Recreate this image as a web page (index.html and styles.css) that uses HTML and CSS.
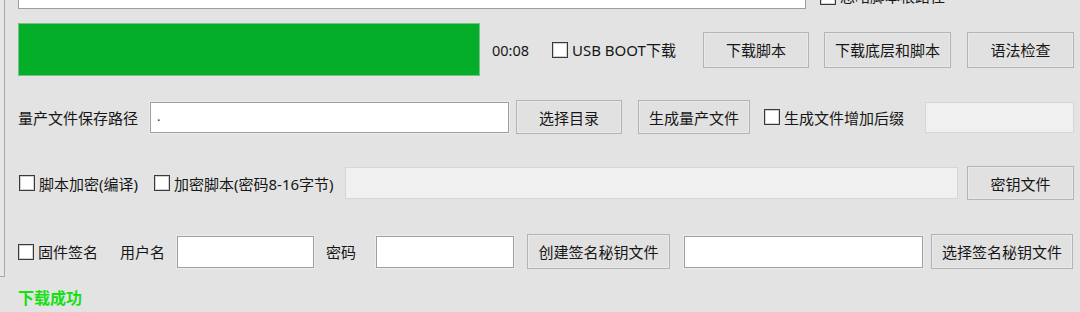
FILE: index.html
```html
<!DOCTYPE html>
<html lang="zh-CN">
<head>
<meta charset="utf-8">
<title>下载工具</title>
<link rel="stylesheet" href="styles.css">
</head>
<body>
<div class="app">
  <div class="frame-edge"></div>

  <div class="row row-top">
    <div class="field field-top"></div>
    <label class="check check-top"><span class="cb"></span><span class="txt">忽略脚本根路径</span></label>
  </div>

  <div class="row row-a">
    <div class="progress"></div>
    <span class="time">00:08</span>
    <label class="check check-usb"><span class="cb"></span><span class="txt">USB BOOT下载</span></label>
    <button class="btn btn-a1">下载脚本</button>
    <button class="btn btn-a2">下载底层和脚本</button>
    <button class="btn btn-a3">语法检查</button>
  </div>

  <div class="row row-b">
    <span class="lbl lbl-path">量产文件保存路径</span>
    <div class="field field-path"><span class="val">.</span></div>
    <button class="btn btn-b1">选择目录</button>
    <button class="btn btn-b2">生成量产文件</button>
    <label class="check check-suffix"><span class="cb"></span><span class="txt">生成文件增加后缀</span></label>
    <div class="field disabled field-suffix"></div>
  </div>

  <div class="row row-c">
    <label class="check check-enc"><span class="cb"></span><span class="txt">脚本加密(编译)</span></label>
    <label class="check check-encpw"><span class="cb"></span><span class="txt">加密脚本(密码8-16字节)</span></label>
    <div class="field disabled field-key"></div>
    <button class="btn btn-c1">密钥文件</button>
  </div>

  <div class="row row-d">
    <label class="check check-sign"><span class="cb"></span><span class="txt">固件签名</span></label>
    <span class="lbl lbl-user">用户名</span>
    <div class="field field-user"></div>
    <span class="lbl lbl-pw">密码</span>
    <div class="field field-pw"></div>
    <button class="btn btn-d1">创建签名秘钥文件</button>
    <div class="field field-sigkey"></div>
    <button class="btn btn-d2">选择签名秘钥文件</button>
  </div>

  <div class="status">下载成功</div>
</div>
</body>
</html>
```
FILE: styles.css
```css
* { box-sizing: border-box; }
html, body {
  margin: 0;
  padding: 0;
  width: 1080px;
  height: 312px;
  overflow: hidden;
  background: #e3e3e3;
}
body {
  font-family: "Noto Sans", "Noto Sans CJK SC", sans-serif;
  font-size: 15px;
  color: #161616;
}
.app {
  position: relative;
  height: 312px;
  padding-left: 18px;
}
.frame-edge {
  position: absolute;
  left: 0;
  top: 0;
  width: 5px;
  height: 293px;
  border-right: 1px solid #a9a9a9;
  border-bottom: 1px solid #a9a9a9;
  background: #e7e7e7;
}
.row {
  display: flex;
  align-items: center;
}
.row-top {
  margin-top: -16px;
  height: 25px;
  align-items: flex-start;
}
.row-a { margin-top: 14px; height: 53px; }
.row-b { margin-top: 24px; height: 34px; }
.row-c { margin-top: 32px; height: 34px; }
.row-d { margin-top: 34px; height: 35px; }

/* text fields */
.field {
  background: #ffffff;
  border: 1px solid #9e9e9e;
  box-shadow: 0 0 0 1px #ececec;
  height: 32px;
  flex: none;
  display: flex;
  align-items: center;
}
.field.disabled {
  background: #f0f0f0;
  border-color: #d6d6d6;
  box-shadow: none;
}
.field-top { width: 788px; height: 25px; box-shadow: none; }
.field-path { width: 359px; height: 31px; padding-left: 6px; }
.field-suffix { width: 149px; height: 31px; }
.field-key { width: 613px; }
.field-user { width: 137px; }
.field-pw { width: 138px; }
.field-sigkey { width: 239px; margin-left: 14px; }
.val { font-size: 13px; line-height: 1; color: #333; margin-top: -2px; }

/* buttons */
.btn {
  flex: none;
  font: inherit;
  color: #161616;
  background: #e1e1e1;
  border: 1px solid #b3b3b3;
  box-shadow: inset 0 0 0 1px #e9e9e9;
  height: 34px;
  padding: 0;
  text-align: center;
}
.btn-a1 { width: 106px; height: 36px; }
.btn-a2 { width: 127px; height: 36px; margin-left: 15px; }
.btn-a3 { width: 107px; height: 36px; margin-left: 16px; }
.btn-b1 { width: 106px; margin-left: 7px; }
.btn-b2 { width: 112px; margin-left: 16px; }
.btn-c1 { width: 107px; margin-left: 9px; }
.btn-d1 { width: 143px; height: 35px; margin-left: 13px; }
.btn-d2 { width: 142px; height: 35px; margin-left: 8px; }

/* checkboxes */
.check {
  flex: none;
  display: flex;
  align-items: center;
  white-space: nowrap;
}
.cb {
  flex: none;
  width: 16px;
  height: 16px;
  background: #ffffff;
  border: 1px solid #3a3a3a;
  box-shadow: inset 0 0 0 1px #d0d0d0;
  margin-right: 4px;
}
.check-top {
  margin-left: 14px;
  margin-top: 3px;
  height: 19px;
  line-height: 19px;
  align-items: flex-end;
}
.check-top .cb { margin-bottom: 1px; }
.check-usb { width: 151px; margin-left: 0; }
.check-suffix { width: 161px; margin-left: 14px; }
.check-enc { width: 135px; margin-left: 1px; }
.check-encpw { width: 191px; }
.check-sign { width: 102px; }

/* labels */
.lbl { flex: none; white-space: nowrap; }
.lbl-path { width: 132px; }
.lbl-user { width: 57px; }
.lbl-pw { width: 50px; margin-left: 12px; }

/* progress */
.progress {
  flex: none;
  width: 462px;
  height: 53px;
  background: #04ae29;
  border: 1px solid #73c184;
}
.time {
  flex: none;
  width: 72px;
  padding-left: 12px;
  font-size: 14.5px;
}

.status {
  margin-top: 19px;
  font-size: 16px;
  line-height: 20px;
  font-weight: bold;
  color: #14e014;
}
```
